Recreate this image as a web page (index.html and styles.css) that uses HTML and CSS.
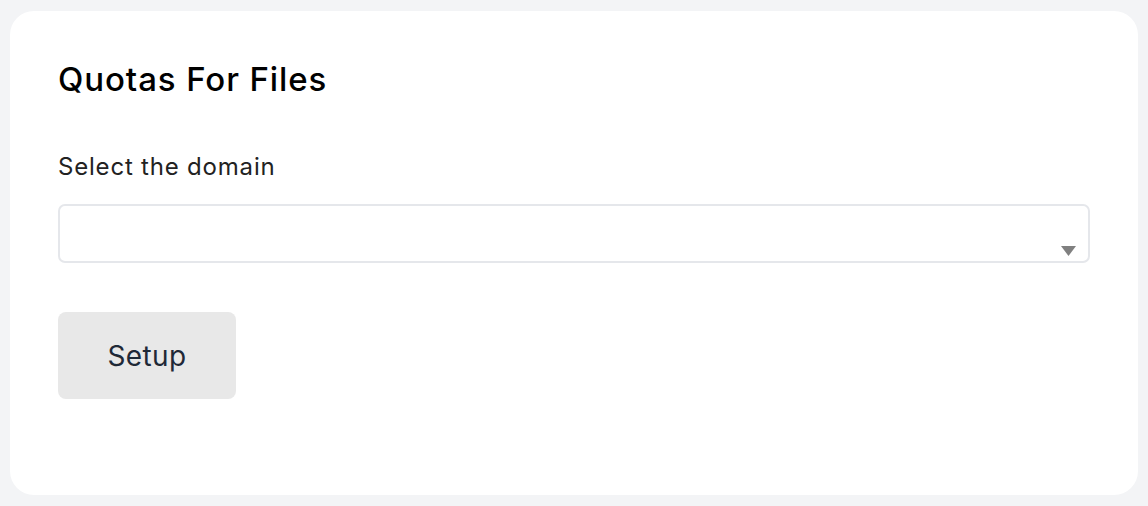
FILE: index.html
```html
<!DOCTYPE html>
<html>
<head>
<meta charset="utf-8">
<link rel="stylesheet" href="styles.css">
</head>
<body>
<div class="card">
  <h1 class="title">Quotas For Files</h1>
  <label class="label">Select the domain</label>
  <div class="select">
    <svg class="arrow" width="15" height="10" viewBox="0 0 15 10"><polygon points="0,0 15,0 7.5,10" fill="#808080"/></svg>
  </div>
  <button class="btn">Setup</button>
</div>
</body>
</html>
```
FILE: styles.css
```css
html, body {
  margin: 0;
  padding: 0;
  background: #f3f4f6;
}
body {
  padding: 11px 10px 0 10px;
  font-family: Inter, "Noto Sans", sans-serif;
}
.card {
  background: #ffffff;
  border-radius: 24px;
  height: 484px;
  box-sizing: border-box;
  padding: 48px 48px 0 48px;
  display: flex;
  flex-direction: column;
  align-items: flex-start;
}
.title {
  margin: 0;
  font-size: 33px;
  font-weight: 500;
  line-height: 40px;
  color: #000;
  letter-spacing: 0.9px;
}
.label {
  margin-top: 52px;
  font-size: 24px;
  line-height: 32px;
  color: #222;
  letter-spacing: 0.8px;
}
.select {
  margin-top: 21px;
  align-self: stretch;
  height: 59px;
  box-sizing: border-box;
  border: 2px solid #e5e7eb;
  border-radius: 7px;
  display: flex;
  justify-content: flex-end;
  align-items: flex-end;
  padding: 0 12px 5px 0;
}
.btn {
  margin-top: 49px;
  width: 178px;
  height: 87px;
  border: none;
  border-radius: 8px;
  background: #e8e8e8;
  font-family: inherit;
  font-size: 28px;
  color: #1f2937;
  padding: 0;
  letter-spacing: 0.4px;
}
```
